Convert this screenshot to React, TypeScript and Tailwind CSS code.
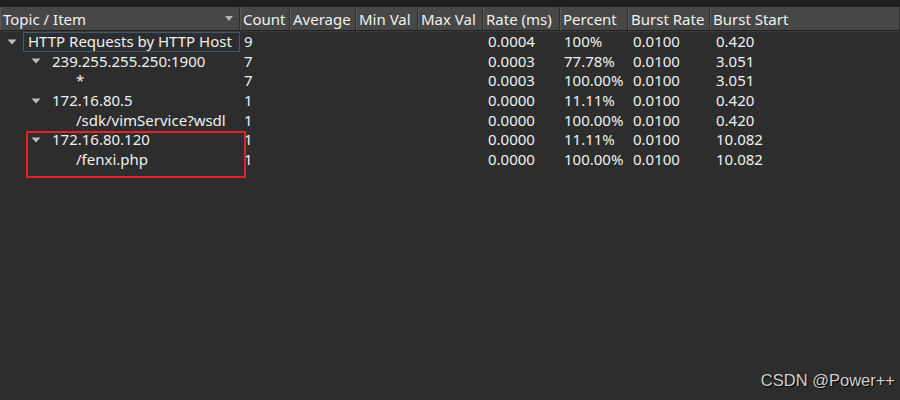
import React from "react";

type Row = {
  level: number;
  label: string;
  expand?: boolean;
  count: string;
  rate: string;
  percent: string;
  burstRate: string;
  burstStart: string;
  focused?: boolean;
};

const ROWS: Row[] = [
  { level: 0, label: "HTTP Requests by HTTP Host", expand: true, count: "9", rate: "0.0004", percent: "100%", burstRate: "0.0100", burstStart: "0.420", focused: true },
  { level: 1, label: "239.255.255.250:1900", expand: true, count: "7", rate: "0.0003", percent: "77.78%", burstRate: "0.0100", burstStart: "3.051" },
  { level: 2, label: "*", count: "7", rate: "0.0003", percent: "100.00%", burstRate: "0.0100", burstStart: "3.051" },
  { level: 1, label: "172.16.80.5", expand: true, count: "1", rate: "0.0000", percent: "11.11%", burstRate: "0.0100", burstStart: "0.420" },
  { level: 2, label: "/sdk/vimService?wsdl", count: "1", rate: "0.0000", percent: "100.00%", burstRate: "0.0100", burstStart: "0.420" },
  { level: 1, label: "172.16.80.120", expand: true, count: "1", rate: "0.0000", percent: "11.11%", burstRate: "0.0100", burstStart: "10.082" },
  { level: 2, label: "/fenxi.php", count: "1", rate: "0.0000", percent: "100.00%", burstRate: "0.0100", burstStart: "10.082" },
];

const COLS = [
  { name: "Topic / Item", w: "w-[240px]" },
  { name: "Count", w: "w-[50px]" },
  { name: "Average", w: "w-[66px]" },
  { name: "Min Val", w: "w-[62px]" },
  { name: "Max Val", w: "w-[65px]" },
  { name: "Rate (ms)", w: "w-[77px]" },
  { name: "Percent", w: "w-[68px]" },
  { name: "Burst Rate", w: "w-[82px]" },
  { name: "Burst Start", w: "flex-1" },
];

function Arrow() {
  return (
    <svg width="10" height="6" viewBox="0 0 10 6" className="shrink-0">
      <polygon points="0.5,0.5 9.5,0.5 5,5.5" fill="#bdbdbd" />
    </svg>
  );
}

export default function App() {
  return (
    <div
      className="relative w-[900px] h-[400px] overflow-hidden bg-[#2d2d2d] text-[#f0f0f0] text-[15px]"
      style={{ fontFamily: '"Noto Sans", "Open Sans", sans-serif' }}
    >
      <div className="h-[7px] bg-[#1f1f1f]" />
      {/* header */}
      <div className="flex h-[24px] bg-[#474747] border-b border-[#222]">
        {COLS.map((c, i) => (
          <div
            key={c.name}
            className={`${c.w} relative flex items-center pl-[3px] pt-px leading-none border-r border-[#2e2e2e] shadow-[inset_1px_0_0_#5a5a5a] whitespace-nowrap`}
          >
            {c.name}
            {i === 0 && (
              <svg width="8" height="5" viewBox="0 0 8 5" className="absolute right-[6px] top-[9px]">
                <polygon points="0,0 8,0 4,5" fill="#b5b5b5" />
              </svg>
            )}
          </div>
        ))}
      </div>
      <div className="h-px bg-[#3a3a3a]" />
      {/* rows */}
      <div className="flex flex-col">
        {ROWS.map((r, idx) => (
          <div key={idx} className="flex h-[19.6px] items-center leading-none whitespace-nowrap">
            <div className="w-[240px] flex items-center h-full">
              <div
                className={
                  r.level === 0 ? "w-[7px]" : r.level === 1 ? "w-[31px]" : "w-[55px]"
                }
              />
              <div className="w-[21px] flex items-center">{r.expand && <Arrow />}</div>
              <div
                className={
                  r.focused
                    ? "flex-1 h-full flex items-center pl-[4px] -ml-[5px] border border-[#3f5a70]"
                    : "flex-1"
                }
              >
                {r.label}
              </div>
            </div>
            <div className="w-[50px] pl-[4px]">{r.count}</div>
            <div className="w-[66px]" />
            <div className="w-[62px]" />
            <div className="w-[65px]" />
            <div className="w-[77px] pl-[5px]">{r.rate}</div>
            <div className="w-[68px] pl-[4px]">{r.percent}</div>
            <div className="w-[82px] pl-[5px]">{r.burstRate}</div>
            <div className="flex-1 pl-[6px]">{r.burstStart}</div>
          </div>
        ))}
      </div>
      {/* highlight box */}
      <div className="absolute left-[26px] top-[131px] w-[220px] h-[47px] border-2 border-[#e0242c]" />
      <div
        className="absolute right-[5px] bottom-[7px] text-[16.5px] text-[#cfcfcf] [text-shadow:1px_1px_1px_#000]"
        style={{ fontFamily: '"Liberation Sans", "Noto Sans CJK SC", sans-serif' }}
      >
        CSDN @Power++
      </div>
    </div>
  );
}
